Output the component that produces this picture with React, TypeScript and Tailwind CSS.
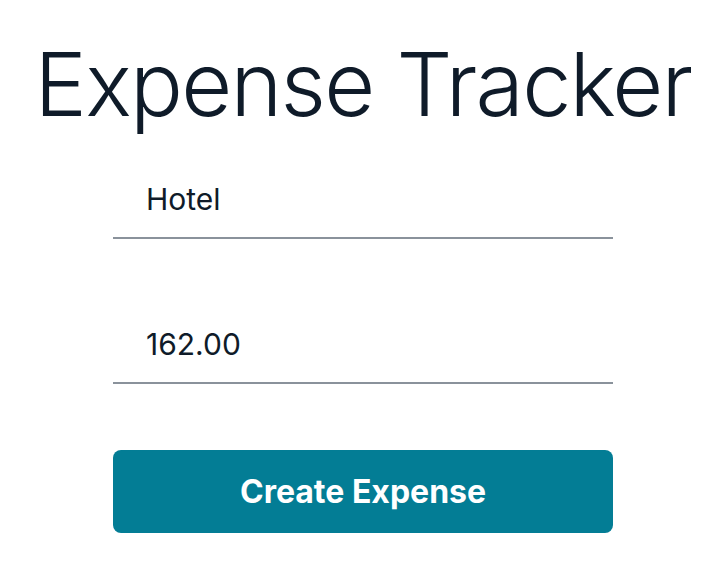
export default function App() {
  return (
    <div
      className="w-[716px] h-[580px] bg-white flex flex-col items-center pl-[10px]"
      style={{ fontFamily: "Inter, 'Noto Sans', sans-serif" }}
    >
      <h1 className="mt-[30px] text-[88px] leading-[108px] font-light text-[#0f1b29] tracking-[-0.02em]">
        Expense Tracker
      </h1>
      <div className="w-[500px] flex flex-col">
        <div className="mt-[1px] h-[100px] border-b-2 border-[#8a929b] flex items-end pb-[20px] pl-[33px]">
          <span className="text-[30px] leading-[36px] text-[#0f1b29]">Hotel</span>
        </div>
        <div className="h-[145px] border-b-2 border-[#8a929b] flex items-end pb-[20px] pl-[33px]">
          <span className="text-[30px] leading-[36px] text-[#0f1b29]">162.00</span>
        </div>
        <button className="mt-[66px] h-[83px] rounded-[8px] bg-[#037d95] text-white text-[32px] font-bold flex items-center justify-center">
          Create Expense
        </button>
      </div>
    </div>
  );
}
